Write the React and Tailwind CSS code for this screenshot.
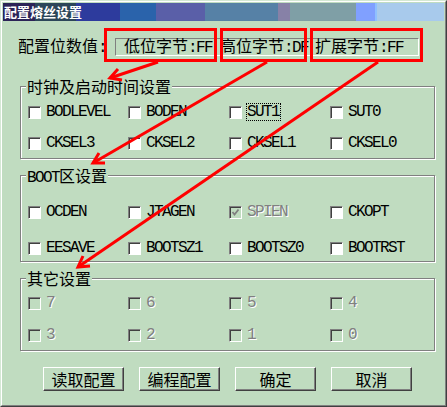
const cjk = "[font-family:'Noto_Sans_CJK_SC',sans-serif]";
const mono = "[font-family:'Liberation_Mono','Noto_Sans_CJK_SC',monospace] text-[16px] tracking-[-1.6px]";

function Lat({ children }) {
  return <span className={mono}>{children}</span>;
}

function Check({ label, disabled, checked, focus }) {
  return (
    <div className="flex items-center h-[16px]">
      <span
        className={`w-[13px] h-[13px] shrink-0 flex items-center justify-center border border-t-[#808080] border-l-[#808080] border-r-white border-b-white shadow-[inset_1px_1px_0_#404040] ${
          disabled ? 'bg-[#c0dcc0]' : 'bg-white'
        }`}
      >
        {checked && (
          <svg width="9" height="9" viewBox="0 0 9 9">
            <polyline points="1.5,4 3.5,6.5 7.5,1.5" fill="none" stroke="#808080" strokeWidth="1.8" />
          </svg>
        )}
      </span>
      <span
        className={`ml-[4px] pr-[1px] leading-[16px] border ${focus ? 'border-dotted border-black' : 'border-transparent'} ${mono} ${
          disabled ? 'text-[#808080] [text-shadow:1px_1px_0_#fff]' : 'text-black'
        }`}
      >
        {label}
      </span>
    </div>
  );
}

function Group({ title, className, rowsClass, items }) {
  return (
    <div
      className={`relative ml-[17px] w-[415px] border border-[#808080] shadow-[1px_1px_0_#fff,inset_1px_1px_0_#fff] ${className}`}
    >
      <div className="absolute left-[5px] top-[-9px] px-[1px] bg-[#c0dcc0] leading-[16px] text-[16px] text-black">
        {title}
      </div>
      <div className={`grid grid-cols-[100px_101px_101px_1fr] pl-[7px] ${rowsClass}`}>
        {items.map((it) => (
          <Check key={it.label} {...it} />
        ))}
      </div>
    </div>
  );
}

function Button({ children }) {
  return (
    <button
      type="button"
      className="w-[81px] h-[24px] flex items-center justify-center bg-[#c0dcc0] text-[16px] leading-[16px] text-black border border-t-white border-l-white border-r-[#404040] border-b-[#404040] shadow-[inset_-1px_-1px_0_#808080]"
    >
      {children}
    </button>
  );
}

const clock = [
  { label: 'BODLEVEL' },
  { label: 'BODEN' },
  { label: 'SUT1', focus: true },
  { label: 'SUT0' },
  { label: 'CKSEL3' },
  { label: 'CKSEL2' },
  { label: 'CKSEL1' },
  { label: 'CKSEL0' },
];

const boot = [
  { label: 'OCDEN' },
  { label: 'JTAGEN' },
  { label: 'SPIEN', disabled: true, checked: true },
  { label: 'CKOPT' },
  { label: 'EESAVE' },
  { label: 'BOOTSZ1' },
  { label: 'BOOTSZ0' },
  { label: 'BOOTRST' },
];

const other = ['7', '6', '5', '4', '3', '2', '1', '0'].map((n) => ({ label: n, disabled: true }));

function Marks() {
  return (
    <svg className="absolute inset-0 pointer-events-none" width="447" height="407" viewBox="0 0 447 407">
      <g fill="none" stroke="#ff0000" strokeWidth="3">
        <rect x="105.5" y="29.5" width="110" height="31" />
        <rect x="221.5" y="29.5" width="84" height="31" />
        <rect x="311.5" y="29.5" width="110" height="31" />
        <line x1="158" y1="62" x2="110" y2="78" />
        <polyline points="122,80 110,78 118,69" />
        <line x1="267" y1="62" x2="93" y2="163" />
        <polyline points="105,163 93,163 99,153" />
        <line x1="378" y1="62" x2="78" y2="267" />
        <polyline points="90,266 78,267 83,256" />
      </g>
    </svg>
  );
}

export default function App() {
  return (
    <div className={`relative w-[447px] h-[407px] ${cjk}`}>
      <div className="w-full h-full bg-[#c0dcc0] border border-t-[#d4e8d4] border-l-[#d4e8d4] border-r-[#404040] border-b-[#404040]">
        <div className="h-full flex flex-col border border-t-white border-l-white border-r-[#808080] border-b-[#808080] p-[1px]">
          <div className="h-[18px] pl-[1px] bg-[linear-gradient(90deg,#2c2457_0_32px,#2c4659_32px_73px,#2d3b9d_73px_117px,#2a63ab_117px_153px,#5a5fa8_153px_202px,#5681a6_202px_275px,#8781a7_275px_287px,#7f9fa6_287px_353px,#80a0ff_353px_372px,#8fc0ff_372px_374px,#a8caec_374px_100%)] text-white font-bold text-[13px] leading-[18px]">
            配置熔丝设置
          </div>

          <div className="mt-[16px] flex items-center text-[16px] leading-[16px] text-black">
            <div className="ml-[15px] w-[97px]">
              配置位数值<Lat>:</Lat>
            </div>
            <div className="h-[18px] w-[304px] flex items-center pl-[8px] border border-t-[#808080] border-l-[#808080] border-r-white border-b-white">
              <span className="w-[96px]">
                低位字节<Lat>:FF</Lat>
              </span>
              <span className="w-[95px]">
                高位字节<Lat>:DF</Lat>
              </span>
              <span>
                扩展字节<Lat>:FF</Lat>
              </span>
            </div>
          </div>

          <Group
            title="时钟及启动时间设置"
            className="mt-[30px] h-[73px]"
            rowsClass="pt-[17px] gap-y-[15px]"
            items={clock}
          />
          <Group
            title={
              <>
                <Lat>BOOT</Lat>区设置
              </>
            }
            className="mt-[16px] h-[87px]"
            rowsClass="pt-[28px] gap-y-[20px]"
            items={boot}
          />
          <Group title="其它设置" className="mt-[16px] h-[73px]" rowsClass="pt-[16px] gap-y-[16px]" items={other} />

          <div className="mt-[16px] ml-[40px] flex gap-[15px]">
            <Button>读取配置</Button>
            <Button>编程配置</Button>
            <Button>确定</Button>
            <Button>取消</Button>
          </div>
        </div>
      </div>
      <Marks />
    </div>
  );
}
